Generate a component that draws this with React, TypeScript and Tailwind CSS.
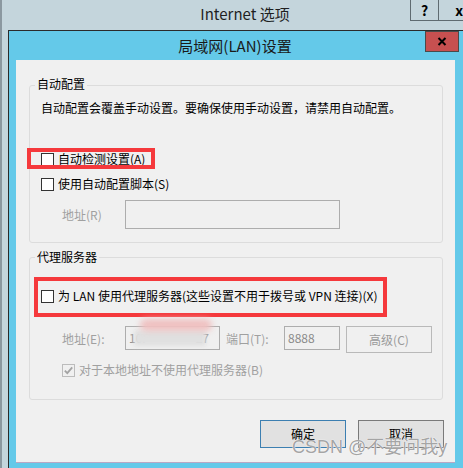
import React from 'react';

const Check = ({ checked = false, disabled = false }: { checked?: boolean; disabled?: boolean }) => (
  <span
    className={
      disabled
        ? 'w-[13px] h-[13px] shrink-0 border border-[#bcbcbc] bg-[#f0f0f0] flex items-center justify-center'
        : 'w-[13px] h-[13px] shrink-0 border border-[#333333] bg-white flex items-center justify-center'
    }
  >
    {checked && (
      <svg width="11" height="11" viewBox="0 0 11 11">
        <path d="M1.8 5.6 L4.3 8.2 L9.2 2.4" fill="none" stroke="#a3a3a3" strokeWidth="1.8" />
      </svg>
    )}
  </span>
);

export default function App() {
  return (
    <div className="w-[463px] h-[468px] bg-[#c4d5dc] border-l-2 border-[#8b98a0] flex flex-col overflow-hidden relative font-['Noto_Sans_CJK_SC','Noto_Sans',sans-serif] text-[12px] leading-[16px] text-[#000000]">
      {/* Internet 选项 title bar */}
      <div className="h-[30px] flex items-start shrink-0">
        <div className="flex-1 pl-[78px] pt-[4px] text-center text-[15px] leading-[20px] text-[#1f1f1f]">Internet 选项</div>
        <div className="w-[28px] h-[21px] border-l border-b border-[#5f6b71] flex items-center justify-center text-[14px] font-bold">?</div>
        <div className="w-[25px] h-[21px] border-l border-b border-[#5f6b71] flex items-center justify-end text-[14px] font-bold">x</div>
      </div>

      <div className="flex flex-1 min-h-0 pl-[6px]">
        {/* LAN dialog */}
        <div className="flex-1 border-l border-t border-[#2b2b2b] bg-[#64c9e9] flex flex-col">
          <div className="h-[29px] flex items-start shrink-0">
            <div className="flex-1 pl-[36px] pt-[5px] text-center text-[15px] leading-[20px] text-[#1a1a1a]">局域网(LAN)设置</div>
            <div className="w-[34px] h-[21px] mr-[4px] bg-[#c75050] border border-[#4a4a4a] flex items-center justify-center">
              <svg width="10" height="9" viewBox="0 0 10 9">
                <path d="M1.5 1 L8.5 8 M8.5 1 L1.5 8" stroke="#000" strokeWidth="2" />
              </svg>
            </div>
          </div>

          <div className="flex-1 ml-[7px] mr-[8px] mb-[5px] bg-[#f0f0f0] border-b border-[#b9a7c4] pl-[13px] pr-[12px] pt-[25px] flex flex-col">
            {/* 自动配置 */}
            <div className="border border-[#dcdcdc] rounded-[3px] pl-[11px] pb-[13px] flex flex-col">
              <span className="-mt-[10px] -ml-[6px] px-[2px] w-fit bg-[#f0f0f0]">自动配置</span>
              <div className="mt-[8px]">自动配置会覆盖手动设置。要确保使用手动设置，请禁用自动配置。</div>
              <div className="mt-[35px] flex items-center gap-[4px] relative">
                <Check />
                <span>自动检测设置(A)</span>
                <div className="absolute left-[-14px] top-[-3px] w-[128px] h-[21px] border-[4px] border-[#f5393c]" />
              </div>
              <div className="mt-[9px] flex items-center gap-[4px]">
                <Check />
                <span>使用自动配置脚本(S)</span>
              </div>
              <div className="mt-[8px] pl-[21px] flex items-center">
                <span className="w-[63px] text-[#a0a0a0]">地址(R)</span>
                <div className="w-[215px] h-[29px] border border-[#adadad] bg-[#f0f0f0]" />
              </div>
            </div>

            {/* 代理服务器 */}
            <div className="mt-[14px] border border-[#dcdcdc] rounded-[3px] pl-[11px] pb-[21px] flex flex-col">
              <span className="-mt-[9px] -ml-[6px] px-[2px] w-fit bg-[#f0f0f0]">代理服务器</span>
              <div className="mt-[23px] flex items-center gap-[4px] relative">
                <Check />
                <span>为 LAN 使用代理服务器(这些设置不用于拨号或 VPN 连接)(X)</span>
                <div className="absolute left-[-7px] top-[-11px] w-[353px] h-[40px] border-[4px] border-[#f5393c]" />
              </div>
              <div className="mt-[22px] pl-[21px] flex items-start">
                <span className="w-[63px] mt-[5px] text-[#a0a0a0]">地址(E):</span>
                <div className="w-[95px] h-[24px] border border-[#adadad] bg-[#f0f0f0] relative flex items-center pl-[3px] text-[#8a8a8a]">
                  <span>10.</span>
                  <span className="ml-auto mr-[10px]">27</span>
                  <div className="absolute left-[8px] top-[3px] w-[72px] h-[16px] bg-[#e0e0e0] blur-[2px]" />
                  <div className="absolute left-[14px] top-[-8px] w-[72px] h-[12px] rounded-full bg-[#efc0c0] blur-[3px]" />
                </div>
                <span className="w-[58px] ml-[6px] mt-[5px] text-[#a0a0a0]">端口(T):</span>
                <div className="w-[56px] h-[24px] border border-[#adadad] bg-[#f0f0f0] pl-[3px] pt-[3px] text-[#8a8a8a]">8888</div>
                <div className="w-[86px] h-[27px] ml-[6px] border border-[#b9b9b9] bg-[#f0f0f0] flex items-center justify-center text-[#9a9a9a]">高级(C)</div>
              </div>
              <div className="mt-[9px] pl-[21px] flex items-center gap-[4px]">
                <Check checked disabled />
                <span className="text-[#a0a0a0]">对于本地地址不使用代理服务器(B)</span>
              </div>
            </div>

            <div className="mt-[20px] flex justify-end gap-[12px] -mr-[1px]">
              <div className="w-[86px] h-[28px] border border-[#3c7fb1] bg-[#e1e1e1] flex items-center justify-center">确定</div>
              <div className="w-[86px] h-[28px] border border-[#7a7a7a] bg-[#e1e1e1] flex items-center justify-center">取消</div>
            </div>
          </div>
        </div>
      </div>

      {/* watermark */}
      <div className="absolute left-[290px] top-[435px] text-[18px] leading-[24px] text-[#8c8c8c]/80 font-['Liberation_Sans','Noto_Sans_CJK_SC',sans-serif] [text-shadow:0_0_1px_#ffffff,0_0_1px_#ffffff]">
        CSDN @不要问我y
      </div>
    </div>
  );
}
